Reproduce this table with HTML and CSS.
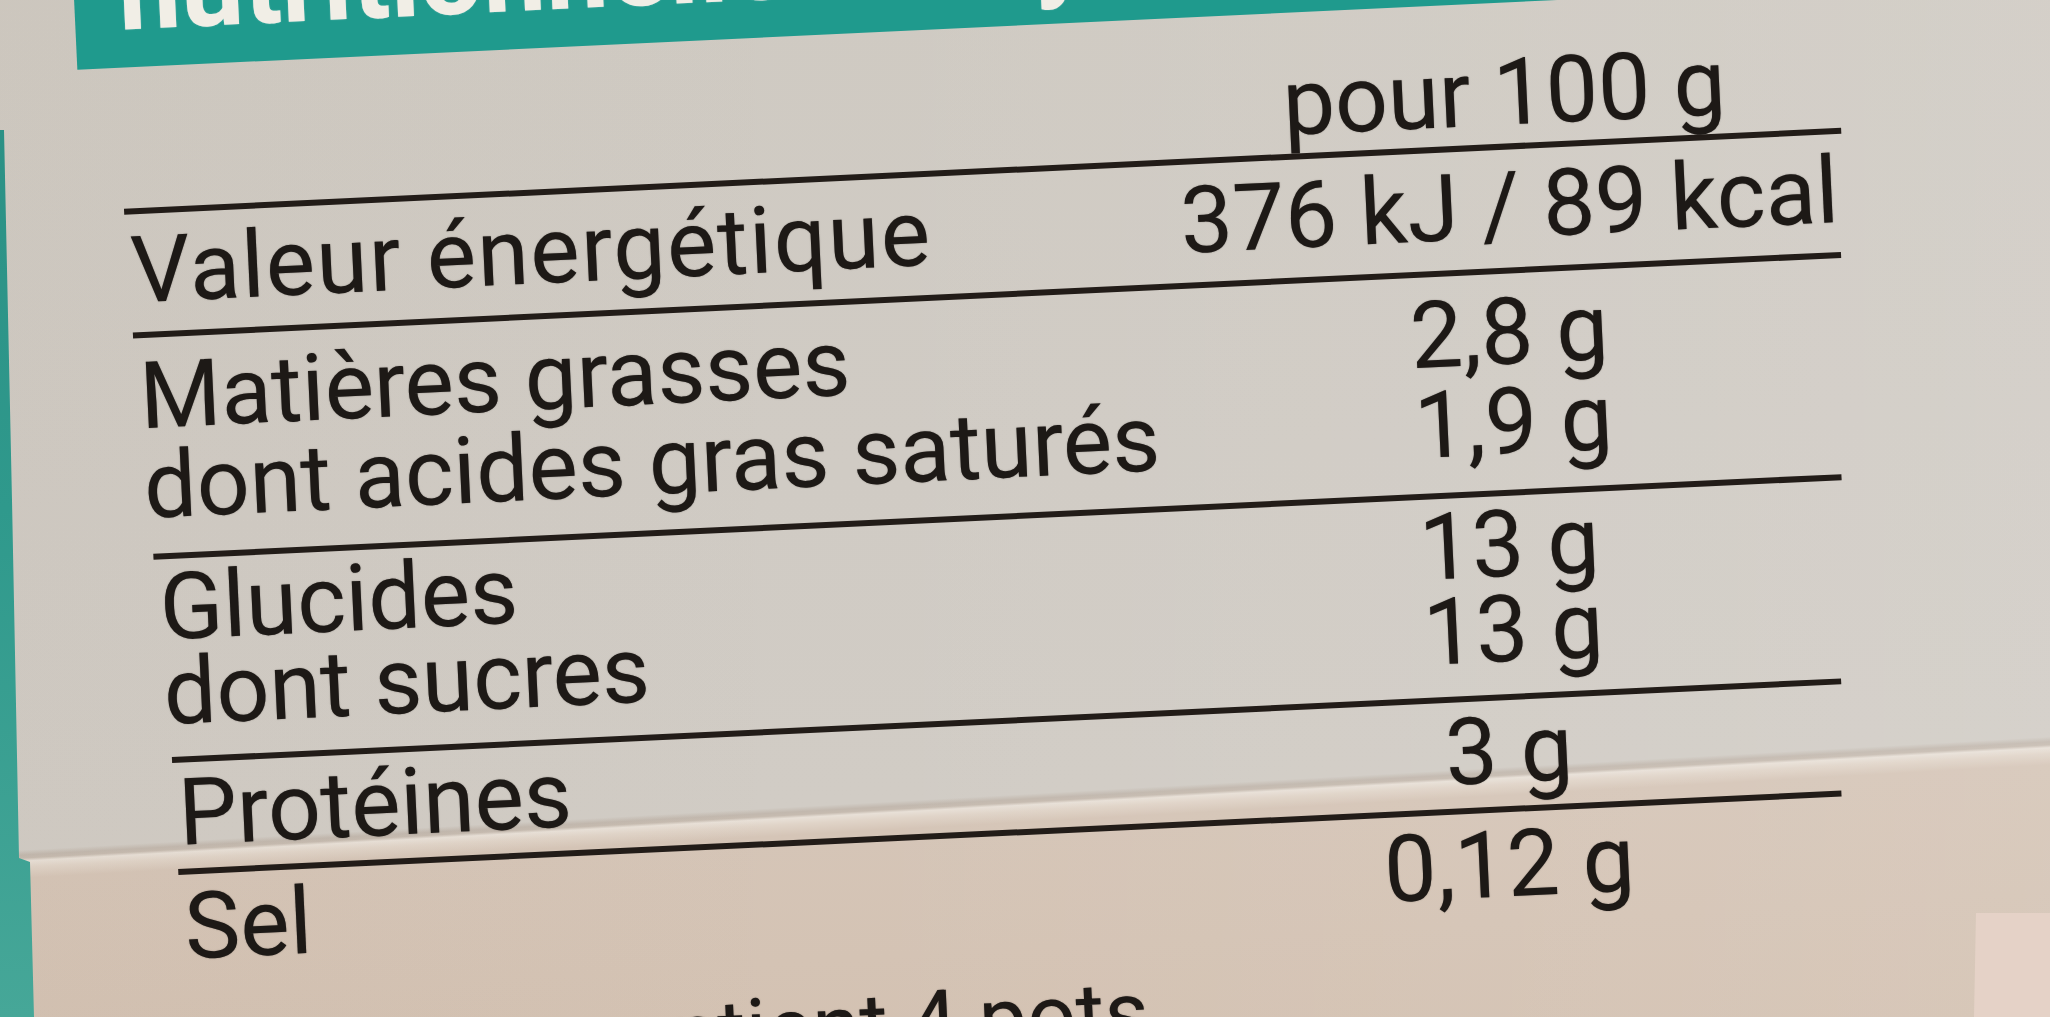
FILE: index.html
```html
<!DOCTYPE html>
<html lang="fr">
<head>
<meta charset="utf-8">
<title>Valeurs nutritionnelles moyennes</title>
<link rel="stylesheet" href="styles.css">
</head>
<body>
<div class="scene">
  <div class="label">
    <div class="band"><span class="band-title">nutritionnelles moyennes</span></div>
    <div class="table">
      <div class="row row-head">
        <div class="cell-label"></div>
        <div class="cell-value">pour 100 g</div>
      </div>
      <div class="row row-energy">
        <div class="cell-label">Valeur énergétique</div>
        <div class="cell-value">376 kJ / 89 kcal</div>
      </div>
      <div class="row row-fat">
        <div class="cell-label"><span class="line">Matières grasses</span><span class="line">dont acides gras saturés</span></div>
        <div class="cell-value"><span class="line">2,8 g</span><span class="line">1,9 g</span></div>
      </div>
      <div class="row row-carb">
        <div class="cell-label"><span class="line">Glucides</span><span class="line">dont sucres</span></div>
        <div class="cell-value"><span class="line">13 g</span><span class="line">13 g</span></div>
      </div>
      <div class="row row-prot">
        <div class="cell-label">Protéines</div>
        <div class="cell-value">3 g</div>
      </div>
      <div class="row row-salt">
        <div class="cell-label">Sel</div>
        <div class="cell-value">0,12 g</div>
      </div>
      <p class="footer">contient 4 pots</p>
    </div>
  </div>
</div>
</body>
</html>
```

FILE: styles.css
```css
html, body {
  margin: 0;
  padding: 0;
}

body {
  width: 2050px;
  height: 1017px;
  overflow: hidden;
  font-family: Roboto, "Liberation Sans", sans-serif;
  background: #cfcbc4;
}

.scene {
  position: relative;
  width: 2050px;
  height: 1017px;
  overflow: hidden;
  background:
    linear-gradient(90deg, rgba(120, 90, 60, 0.03) 0, rgba(255, 255, 255, 0) 40%, rgba(255, 255, 255, 0.1) 100%),
    linear-gradient(176.8deg,
      #cfcac2 0,
      #d0cbc4 520px,
      #d1ccc5 850px,
      #c2b8ae 855px,
      #c6bbb0 858px,
      #e8e0d7 861px,
      #e0d4c8 867px,
      #d5c5b7 878px,
      #d3c1b1 100%);
}

/* teal edge of the neighbouring panel */
.scene::before {
  content: "";
  position: absolute;
  left: 0;
  top: 0;
  width: 40px;
  height: 1017px;
  background: linear-gradient(180deg, #2a8e83 0, #2f998c 50%, #46a798 100%);
  clip-path: polygon(0 130px, 4px 130px, 12px 500px, 19px 858px, 30px 862px, 34px 1017px, 0 1017px);
}

/* pale card in the lower right corner */
.scene::after {
  content: "";
  position: absolute;
  right: 0;
  bottom: 0;
  width: 76px;
  height: 104px;
  background: #e5d2c7;
  clip-path: polygon(2px 0, 100% 0, 100% 100%, 0 100%);
}

.label {
  width: 2200px;
  transform: translate(68px, -129px) rotate(-2.7deg);
  transform-origin: 0 0;
  color: #1d1916;
  text-shadow: 0 0 1.2px rgba(30, 24, 20, 0.55);
}

.band {
  box-sizing: border-box;
  height: 199px;
  width: 2200px;
  background: #1f9a8d;
  display: flex;
  align-items: flex-end;
  padding: 0 0 20px 44px;
}

.band-title {
  font-weight: 700;
  font-size: 112px;
  line-height: 112px;
  color: #f1eee6;
  white-space: nowrap;
  text-shadow: 0 0 1.5px rgba(255, 255, 255, 0.4);
}

.table {
  width: 1719px;
  margin-left: 40px;
  font-size: 93px;
  font-weight: 400;
}

.row {
  display: grid;
  grid-template-columns: 1fr 670px;
  border-top: 6px solid #221c18;
  white-space: nowrap;
}

.cell-label {
  padding-left: 4px;
}

.cell-value {
  text-align: center;
}

.line {
  display: block;
}

.row-head {
  border-top: 0;
  line-height: 88px;
  padding: 47px 0 6px;
}

.row-energy {
  line-height: 88px;
  padding: 13px 0 17px;
}

.row-energy .cell-label {
  letter-spacing: 1.5px;
}

.row-fat {
  line-height: 90px;
  padding: 14px 0 22px;
  margin: 0 6px 0 3px;
}

.row-carb {
  line-height: 85px;
  padding: 6px 0 22px;
  margin: 0 16px 0 13px;
}

.row-prot {
  line-height: 88px;
  padding: 7px 0 11px;
  margin: 0 26px 0 22px;
}

.row-salt {
  line-height: 88px;
  padding: 9px 0 0;
  margin: 0 31px 0 23px;
}

.footer {
  margin: 42px 0 0 413px;
  font-size: 86px;
  line-height: 88px;
  white-space: nowrap;
}
```
